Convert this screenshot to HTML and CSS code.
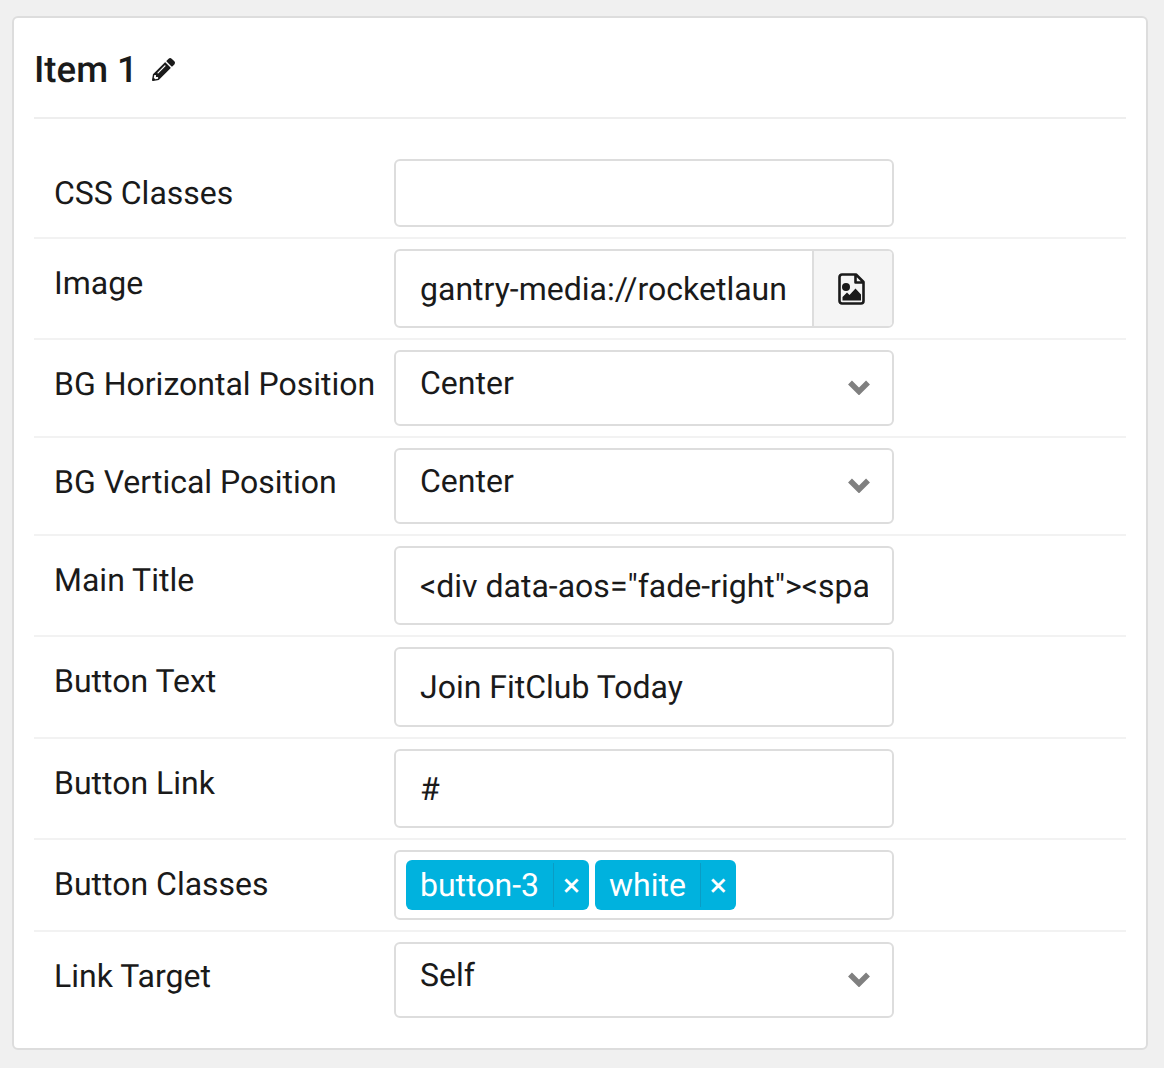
FILE: index.html
```html
<!DOCTYPE html>
<html lang="en">
<head>
    <meta charset="UTF-8">
    <title>Item 1</title>
    <link rel="stylesheet" href="styles.css">
</head>
<body>
<div class="card">
    <h2 class="card-title">
        Item 1
        <svg class="edit-icon" viewBox="0 0 512 512"><path d="M497.9 142.1l-46.1 46.1c-4.7 4.7-12.3 4.7-17 0l-111-111c-4.7-4.7-4.7-12.3 0-17l46.1-46.1c18.7-18.7 49.1-18.7 67.9 0l60.1 60.1c18.8 18.7 18.8 49.1 0 67.9zM284.2 99.8L21.6 362.4.4 483.9c-2.9 16.4 11.4 30.6 27.8 27.8l121.5-21.3 262.6-262.6c4.7-4.7 4.7-12.3 0-17l-111-111c-4.8-4.7-12.4-4.7-17.1 0zM124.1 339.9c-5.5-5.5-5.5-14.3 0-19.8l154-154c5.5-5.5 14.3-5.5 19.8 0s5.5 14.3 0 19.8l-154 154c-5.5 5.5-14.3 5.5-19.8 0zM88 424h48v36.3l-64.5 11.3-31.1-31.1L51.7 376H88v48z"/></svg>
    </h2>
    <div class="fields">
        <div class="row">
            <label class="row-label">CSS Classes</label>
            <div class="control h-68"></div>
        </div>
        <div class="row">
            <label class="row-label">Image</label>
            <div class="control h-79 with-addon">
                <span class="value clip">gantry-media://rocketlaun</span>
                <span class="addon">
                    <svg class="file-icon" viewBox="0 0 27 32">
                        <path class="file-outline" d="M4 1.5H18L25.5 9V28A2.5 2.5 0 0 1 23 30.5H4A2.5 2.5 0 0 1 1.5 28V4A2.5 2.5 0 0 1 4 1.5ZM17.5 1.5V9.5H25.5"/>
                        <circle cx="8" cy="14" r="4"/>
                        <path d="M4.5 27.5V24L9 19.5 11.5 22 17.5 15.5 23 21.5V27.5Z"/>
                    </svg>
                </span>
            </div>
        </div>
        <div class="row">
            <label class="row-label">BG Horizontal Position</label>
            <div class="control h-76 select"><span class="value">Center</span><svg class="chevron" viewBox="0 0 24 16"><path d="M3 3.5L12 12.5 21 3.5"/></svg></div>
        </div>
        <div class="row">
            <label class="row-label">BG Vertical Position</label>
            <div class="control h-76 select"><span class="value">Center</span><svg class="chevron" viewBox="0 0 24 16"><path d="M3 3.5L12 12.5 21 3.5"/></svg></div>
        </div>
        <div class="row">
            <label class="row-label">Main Title</label>
            <div class="control h-79"><span class="value clip">&lt;div data-aos="fade-right"&gt;&lt;spa</span></div>
        </div>
        <div class="row">
            <label class="row-label">Button Text</label>
            <div class="control h-80"><span class="value">Join FitClub Today</span></div>
        </div>
        <div class="row">
            <label class="row-label">Button Link</label>
            <div class="control h-79"><span class="value">#</span></div>
        </div>
        <div class="row">
            <label class="row-label">Button Classes</label>
            <div class="control h-70 tags">
                <span class="tag">button-3<span class="tag-x">×</span></span>
                <span class="tag">white<span class="tag-x">×</span></span>
            </div>
        </div>
        <div class="row last">
            <label class="row-label">Link Target</label>
            <div class="control h-76 select"><span class="value">Self</span><svg class="chevron" viewBox="0 0 24 16"><path d="M3 3.5L12 12.5 21 3.5"/></svg></div>
        </div>
    </div>
</div>
</body>
</html>
```

FILE: styles.css
```css
* {
    box-sizing: border-box;
}
body {
    margin: 0;
    padding: 16px 16px 18px 12px;
    background-color: #f0f0f0;
    font-family: Roboto, sans-serif;
    color: #1a1a1a;
    text-rendering: geometricPrecision;
}
.card {
    background-color: #fff;
    border: 2px solid #ddd;
    border-radius: 6px;
    padding: 0 20px 20px;
}
.card-title {
    display: flex;
    align-items: center;
    gap: 14px;
    height: 101px;
    margin: 0 0 30px;
    padding-top: 4px;
    border-bottom: 2px solid #eee;
    font-size: 36.6px;
    font-weight: 500;
}
.edit-icon {
    width: 23px;
    height: 23px;
    fill: #1a1a1a;
}
.row {
    display: flex;
    padding: 10px 0;
    border-bottom: 2px solid #f2f2f2;
}
.row.last {
    border-bottom: none;
    padding-bottom: 10px;
}
.row-label {
    width: 360px;
    padding: 10px 0 0 20px;
    font-size: 32px;
    line-height: 48px;
}
.control {
    display: flex;
    align-items: center;
    width: 500px;
    border: 2px solid #ddd;
    border-radius: 6px;
    padding: 0 24px;
    font-size: 32px;
    overflow: hidden;
}
.h-68 { height: 68px; }
.h-70 { height: 70px; }
.h-76 { height: 76px; }
.h-79 { height: 79px; }
.h-80 { height: 80px; }
.value {
    white-space: nowrap;
}
.clip {
    flex: 1;
    overflow: hidden;
}
.with-addon {
    padding-right: 0;
}
.addon {
    display: flex;
    align-items: center;
    justify-content: center;
    flex: none;
    width: 80px;
    height: 100%;
    margin-left: 26px;
    background-color: #f5f5f5;
    border-left: 2px solid #ddd;
}
.file-icon {
    width: 27px;
    height: 32px;
    margin-right: 3px;
    fill: #1a1a1a;
}
.file-outline {
    fill: none;
    stroke: #1a1a1a;
    stroke-width: 2.6;
    stroke-linejoin: round;
}
.select {
    justify-content: space-between;
    padding-bottom: 10px;
}
.chevron {
    flex: none;
    width: 24px;
    height: 16px;
    margin: 7px -3px 0 0;
    fill: none;
    stroke: #808080;
    stroke-width: 5.5;
}
.tags {
    gap: 6px;
    padding: 0 10px;
}
.tag {
    display: flex;
    align-items: center;
    height: 50px;
    padding-left: 14px;
    background-color: #00b2de;
    border-radius: 6px;
    color: #fff;
}
.tag-x {
    display: flex;
    align-items: center;
    justify-content: center;
    width: 36px;
    height: 44px;
    margin-left: 14px;
    border-left: 1px solid #0a9cc4;
    font-size: 32px;
}
```
